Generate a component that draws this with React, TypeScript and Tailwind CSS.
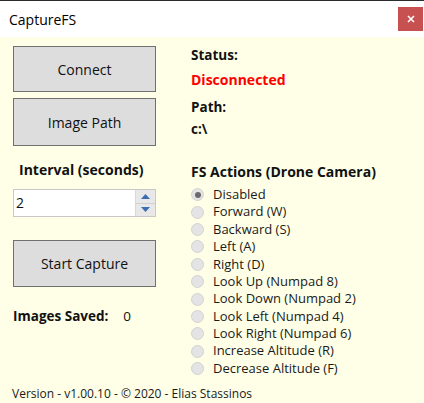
import React from "react";

const actions = [
  "Disabled",
  "Forward (W)",
  "Backward (S)",
  "Left (A)",
  "Right (D)",
  "Look Up (Numpad 8)",
  "Look Down (Numpad 2)",
  "Look Left (Numpad 4)",
  "Look Right (Numpad 6)",
  "Increase Altitude (R)",
  "Decrease Altitude (F)",
];

function WinButton({ label, className = "" }: { label: string; className?: string }) {
  return (
    <button
      className={
        "w-[143px] bg-[#dddddd] border border-[#707070] text-[14px] text-[#111] flex items-center justify-center " +
        className
      }
    >
      {label}
    </button>
  );
}

function Radio({ label, checked }: { label: string; checked?: boolean }) {
  return (
    <div className="flex items-center h-[17.4px]">
      <span className="w-[13px] h-[13px] rounded-full bg-[#e4e4e4] border border-[#d2d2d2] flex items-center justify-center">
        {checked && <span className="w-[6px] h-[6px] rounded-full bg-[#6a6a6a]" />}
      </span>
      <span className="ml-[9px] text-[13px] text-[#1a1a1a]">{label}</span>
    </div>
  );
}

export default function App() {
  return (
    <div
      className="w-[424px] h-[403px] flex flex-col border-t border-[#2b2b2b] overflow-hidden"
      style={{ fontFamily: '"Open Sans", "Noto Sans", sans-serif' }}
    >
      <div className="h-[36px] bg-white flex items-center justify-between">
        <span className="ml-[9px] text-[14px] text-black">CaptureFS</span>
        <div className="w-[25px] h-[24px] mr-[1px] bg-[#c75050] flex items-center justify-center">
          <svg width="8" height="8" viewBox="0 0 8 8">
            <path d="M1 1 L7 7 M7 1 L1 7" stroke="white" strokeWidth="1.6" />
          </svg>
        </div>
      </div>

      <div className="flex-1 bg-[#ffffe8] flex flex-col">
        <div className="flex flex-1">
          <div className="w-[178px] pl-[13px] flex flex-col">
            <WinButton label="Connect" className="mt-[9px] h-[46px]" />
            <WinButton label="Image Path" className="mt-[6px] h-[48px]" />
            <div className="mt-[13px] ml-[6px] font-bold text-[14px] text-[#111]">Interval (seconds)</div>
            <div className="mt-[9px] w-[143px] h-[28px] bg-white border border-[#c8c8c8] flex">
              <span className="flex-1 pl-[2px] text-[14px] leading-[26px] text-[#111]">2</span>
              <div className="w-[20px] flex flex-col border-l border-[#d8d8d8]">
                <div className="flex-1 bg-[#e8e8e8] border-b border-[#d0d0d0] flex items-center justify-center">
                  <svg width="9" height="5" viewBox="0 0 9 5">
                    <path d="M0 5 L4.5 0 L9 5 Z" fill="#3a6db3" />
                  </svg>
                </div>
                <div className="flex-1 bg-[#e8e8e8] flex items-center justify-center">
                  <svg width="9" height="5" viewBox="0 0 9 5">
                    <path d="M0 0 L4.5 5 L9 0 Z" fill="#3a6db3" />
                  </svg>
                </div>
              </div>
            </div>
            <WinButton label="Start Capture" className="mt-[23px] h-[47px]" />
            <div className="mt-[19px] flex items-center text-[13.5px] text-[#111]">
              <span className="font-bold">Images Saved:</span>
              <span className="ml-[15px] font-normal">0</span>
            </div>
          </div>

          <div className="flex-1 pl-[13px] flex flex-col">
            <div className="mt-[9px] font-bold text-[13.5px] text-[#111] leading-[19px]">Status:</div>
            <div className="mt-[5px] font-bold text-[14px] text-[#ff0000] leading-[19px]">Disconnected</div>
            <div className="mt-[9px] font-bold text-[13.5px] text-[#111] leading-[19px]">Path:</div>
            <div className="mt-[3px] font-bold text-[13.5px] text-[#111] leading-[19px]">c:\</div>
            <div className="mt-[23px] font-bold text-[14px] text-[#111] leading-[19px]">FS Actions (Drone Camera)</div>
            <div className="mt-[5px] flex flex-col">
              {actions.map((a, i) => (
                <Radio key={a} label={a} checked={i === 0} />
              ))}
            </div>
          </div>
        </div>
        <div className="pl-[12px] h-[17px] text-[12px] leading-[15px] text-[#1a1a1a]">
          Version - v1.00.10 - © 2020 - Elias Stassinos
        </div>
      </div>
    </div>
  );
}
